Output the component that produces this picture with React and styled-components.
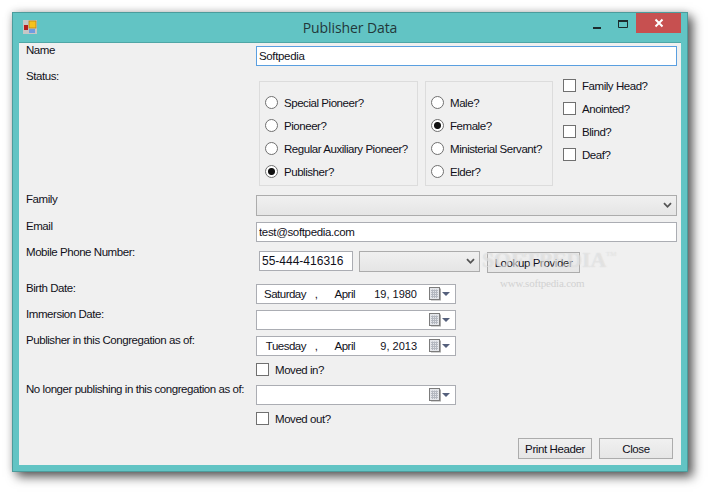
import React from 'react'
import styled, { createGlobalStyle } from 'styled-components'

const GlobalStyle = createGlobalStyle`
  html, body {
    margin: 0;
    background: #fff;
  }
  body {
    font-family: 'Liberation Sans', Arial, sans-serif;
    font-size: 11.5px;
    color: #10101a;
  }
  #root {
    box-sizing: border-box;
    min-height: 100vh;
    padding: 12px 0 0 12px;
  }
`

const Window = styled.div`
  position: relative;
  box-sizing: border-box;
  width: 676px;
  height: 460px;
  display: flex;
  flex-direction: column;
  background: #62c4c4;
  border: 1px solid #4c9c9c;
  box-shadow: 5px 5px 10px rgba(0, 0, 0, 0.62), 0 0 8px rgba(0, 0, 0, 0.18);
`
const TitleBar = styled.div`
  height: 30px;
  display: flex;
  align-items: flex-start;
  padding: 0 6px 0 10px;
  flex-shrink: 0;
`
const AppIcon = styled.svg`
  width: 14px;
  height: 14px;
  margin-top: 7px;
`
const Title = styled.div`
  flex: 1;
  text-align: center;
  font-family: 'Open Sans', sans-serif;
  font-size: 14px;
  letter-spacing: -0.1px;
  line-height: 30px;
  color: #22383a;
  padding-left: 80px;
`
const CaptionButton = styled.div`
  width: ${p => p.$w}px;
  height: 20px;
  display: flex;
  align-items: center;
  justify-content: center;
  background: ${p => (p.$close ? '#c75050' : 'transparent')};
`
const Client = styled.div`
  flex: 1;
  margin: 0 6px 6px;
  background: #f0f0f0;
  display: flex;
  flex-direction: column;
  padding: 0 4px 0 7px;
  box-shadow: 0 -1px 0 #4fa6a6;
`
const Row = styled.div`
  display: flex;
  align-items: flex-start;
  margin-top: ${p => p.$top || 0}px;
`
const Label = styled.div`
  width: 230px;
  flex-shrink: 0;
  line-height: 14px;
  letter-spacing: -0.44px;
  white-space: nowrap;
`
const TextInput = styled.input`
  box-sizing: border-box;
  display: block;
  width: ${p => p.$w || 421}px;
  height: 20px;
  margin: ${p => p.$mt ?? 3}px 0 0 ${p => p.$ml || 0}px;
  padding: 0 2px 1px;
  background: #fff;
  border: 1px solid ${p => (p.$focus ? '#5a9fe0' : '#abadb3')};
  border-radius: 0;
  outline: none;
  font-family: inherit;
  font-size: ${p => (p.$digits ? 12 : 11.5)}px;
  letter-spacing: ${p => (p.$digits ? 0 : -0.35)}px;
  color: #10101a;
`
const Combo = styled.div`
  box-sizing: border-box;
  width: ${p => p.$w}px;
  height: 21px;
  margin: ${p => p.$mt ?? 3}px 0 0 ${p => p.$ml || 0}px;
  display: flex;
  align-items: center;
  justify-content: flex-end;
  padding-right: 4px;
  border: 1px solid #acacac;
  background: linear-gradient(#f0f0f0, #e5e5e5);
`
const Groups = styled.div`
  display: flex;
  align-items: flex-start;
  margin: 10px 0 0 3px;
`
const GroupBox = styled.div`
  box-sizing: border-box;
  width: ${p => p.$w}px;
  height: 105px;
  margin-top: 2px;
  margin-right: ${p => p.$mr}px;
  padding: 9px 0 0 5px;
  border: 1px solid #dcdcdc;
  display: flex;
  flex-direction: column;
`
const Option = styled.label`
  display: flex;
  align-items: center;
  height: 23px;
  flex-shrink: 0;
  white-space: nowrap;
  letter-spacing: -0.45px;
`
const Radio = styled.input.attrs({ type: 'radio' })`
  appearance: none;
  box-sizing: border-box;
  width: 13px;
  height: 13px;
  margin: 0 6px 0 0;
  flex-shrink: 0;
  border: 1px solid #707070;
  border-radius: 50%;
  background: #fff;
  &:checked {
    background: radial-gradient(circle, #111 0 3px, #555 3.4px, #fff 4px);
  }
`
const Check = styled.input.attrs({ type: 'checkbox' })`
  appearance: none;
  box-sizing: border-box;
  width: 13px;
  height: 13px;
  margin: 0 6px 0 0;
  flex-shrink: 0;
  border: 1px solid #707070;
  background: #fff;
`
const CheckColumn = styled.div`
  display: flex;
  flex-direction: column;
  margin-top: -5px;
`
const DateField = styled.div`
  box-sizing: border-box;
  width: 200px;
  height: 20px;
  margin-top: 3px;
  display: flex;
  align-items: center;
  padding-left: 3px;
  background: #fff;
  border: 1px solid #abadb3;
`
const Segment = styled.span`
  width: ${p => p.$w}px;
  text-align: ${p => p.$align || 'right'};
  font-size: ${p => (p.$digits ? 11 : 11.5)}px;
  letter-spacing: ${p => (p.$digits ? 0 : -0.5)}px;
  flex-shrink: 0;
`
const Calendar = styled.svg`
  width: 22px;
  height: 14px;
  margin-left: auto;
  margin-right: 4px;
`
const PushButton = styled.button`
  box-sizing: border-box;
  width: ${p => p.$w}px;
  height: 21px;
  padding: 0;
  margin: ${p => p.$mt || 0}px 0 0 ${p => p.$ml || 0}px;
  background: linear-gradient(#f0f0f0, #e6e6e6);
  border: 1px solid #acacac;
  border-radius: 0;
  font-family: inherit;
  font-size: 11.5px;
  letter-spacing: -0.4px;
  color: #10101a;
`
const Footer = styled.div`
  display: flex;
  justify-content: flex-end;
  padding-right: 4px;
  margin-top: 8px;
  gap: 7px;
`
const Watermark = styled.div`
  position: absolute;
  left: 469px;
  top: 234px;
  font-family: 'Liberation Serif', serif;
  font-weight: 700;
  font-size: 22px;
  letter-spacing: -0.2px;
  color: rgba(255, 255, 255, 0.35);
  text-shadow: 0 0 1px rgba(190, 190, 190, 0.6);
  pointer-events: none;
`
const WatermarkMark = styled.sup`
  font-size: 7px;
  font-weight: 400;
  vertical-align: 11px;
  line-height: 0;
`
const WatermarkUrl = styled.div`
  position: absolute;
  left: 487px;
  top: 264px;
  font-family: 'Liberation Serif', serif;
  font-size: 11px;
  letter-spacing: -0.2px;
  color: #d2d2d2;
  pointer-events: none;
`

const Chevron = () => (
  <svg width="9" height="7" viewBox="0 0 9 7">
    <path d="M1 1.2 L4.5 4.8 L8 1.2" fill="none" stroke="#555" strokeWidth="1.8" />
  </svg>
)

const CalendarIcon = () => (
  <Calendar viewBox="0 0 22 14">
    <rect x="2" y="1.5" width="10" height="12" fill="#a8a8a8" />
    <rect x="0.5" y="0.5" width="10" height="12" fill="#e4e6ea" stroke="#7c7c7c" />
    <path d="M2 3.5h7M2 5.5h7M2 7.5h7M2 9.5h7M3.5 2.5v8.5M5.5 2.5v8.5M7.5 2.5v8.5" stroke="#b4b8c0" strokeWidth="1" />
    <path d="M13 5 H21 L17 9 Z" fill="#55607c" />
  </Calendar>
)

const DateInput = ({ weekday, month, rest }) => (
  <DateField>
    {weekday && (
      <>
        <Segment $w={46}>{weekday}</Segment>
        <Segment $w={20} $align="center">
          ,
        </Segment>
        <Segment $w={29}>{month}</Segment>
        <Segment $w={62} $digits>
          {rest}
        </Segment>
      </>
    )}
    <CalendarIcon />
  </DateField>
)

export default function App() {
  return (
    <Window>
      <GlobalStyle />
      <TitleBar>
        <AppIcon viewBox="0 0 14 14">
          <rect x="0" y="0" width="14" height="14" fill="#c6c6c6" />
          <rect x="6" y="1" width="7" height="7" fill="#f7c21d" stroke="#b9861a" strokeWidth="0.8" />
          <rect x="1" y="5" width="4" height="5" fill="#b31c1c" />
          <rect x="6" y="9" width="6" height="4" fill="#6f9be0" />
        </AppIcon>
        <Title>Publisher Data</Title>
        <CaptionButton $w={27}>
          <svg width="8" height="14" viewBox="0 0 8 14">
            <rect x="0" y="11" width="8" height="2" fill="#1c2c2e" />
          </svg>
        </CaptionButton>
        <CaptionButton $w={26}>
          <svg width="10" height="14" viewBox="0 0 10 14">
            <path d="M0.5 4.5h9v7h-9z" fill="none" stroke="#1c2c2e" />
            <rect x="0" y="4" width="10" height="2" fill="#1c2c2e" />
          </svg>
        </CaptionButton>
        <CaptionButton $w={45} $close>
          <svg width="10" height="10" viewBox="0 0 10 10">
            <path d="M1.5 1.5 L8.5 8.5 M8.5 1.5 L1.5 8.5" stroke="#fff" strokeWidth="2" />
          </svg>
        </CaptionButton>
      </TitleBar>
      <Client>
        <Row>
          <Label>Name</Label>
          <TextInput $focus defaultValue="Softpedia" />
        </Row>
        <Row $top={3}>
          <Label>Status:</Label>
          <Groups>
            <GroupBox $w={159} $mr={7}>
              <Option>
                <Radio name="role" />
                Special Pioneer?
              </Option>
              <Option>
                <Radio name="role" />
                Pioneer?
              </Option>
              <Option>
                <Radio name="role" />
                Regular Auxiliary Pioneer?
              </Option>
              <Option>
                <Radio name="role" defaultChecked />
                Publisher?
              </Option>
            </GroupBox>
            <GroupBox $w={128} $mr={10}>
              <Option>
                <Radio name="gender" />
                Male?
              </Option>
              <Option>
                <Radio name="gender" defaultChecked />
                Female?
              </Option>
              <Option>
                <Radio name="gender" />
                Ministerial Servant?
              </Option>
              <Option>
                <Radio name="gender" />
                Elder?
              </Option>
            </GroupBox>
            <CheckColumn>
              <Option>
                <Check />
                Family Head?
              </Option>
              <Option>
                <Check />
                Anointed?
              </Option>
              <Option>
                <Check />
                Blind?
              </Option>
              <Option>
                <Check />
                Deaf?
              </Option>
            </CheckColumn>
          </Groups>
        </Row>
        <Row $top={6}>
          <Label>Family</Label>
          <Combo $w={421}>
            <Chevron />
          </Combo>
        </Row>
        <Row $top={3}>
          <Label>Email</Label>
          <TextInput defaultValue="test@softpedia.com" />
        </Row>
        <Row $top={3}>
          <Label>Mobile Phone Number:</Label>
          <TextInput $w={94} $ml={3} $mt={6} $digits defaultValue="55-444-416316" />
          <Combo $w={121} $ml={6} $mt={6}>
            <Chevron />
          </Combo>
          <PushButton $w={93} $ml={7} $mt={7}>
            Lookup Provider
          </PushButton>
        </Row>
        <Row $top={8}>
          <Label>Birth Date:</Label>
          <DateInput weekday="Saturday" month="April" rest="19, 1980" />
        </Row>
        <Row $top={3}>
          <Label>Immersion Date:</Label>
          <DateInput />
        </Row>
        <Row $top={3}>
          <Label>Publisher in this Congregation as of:</Label>
          <DateInput weekday="Tuesday" month="April" rest="9, 2013" />
        </Row>
        <Row $top={2}>
          <Label />
          <Option>
            <Check />
            Moved in?
          </Option>
        </Row>
        <Row $top={1}>
          <Label>No longer publishing in this congregation as of:</Label>
          <DateInput />
        </Row>
        <Row $top={2}>
          <Label />
          <Option>
            <Check />
            Moved out?
          </Option>
        </Row>
        <Footer>
          <PushButton $w={74}>Print Header</PushButton>
          <PushButton $w={74}>Close</PushButton>
        </Footer>
      </Client>
      <Watermark>
        SOFTPEDIA<WatermarkMark>TM</WatermarkMark>
      </Watermark>
      <WatermarkUrl>www.softpedia.com</WatermarkUrl>
    </Window>
  )
}
